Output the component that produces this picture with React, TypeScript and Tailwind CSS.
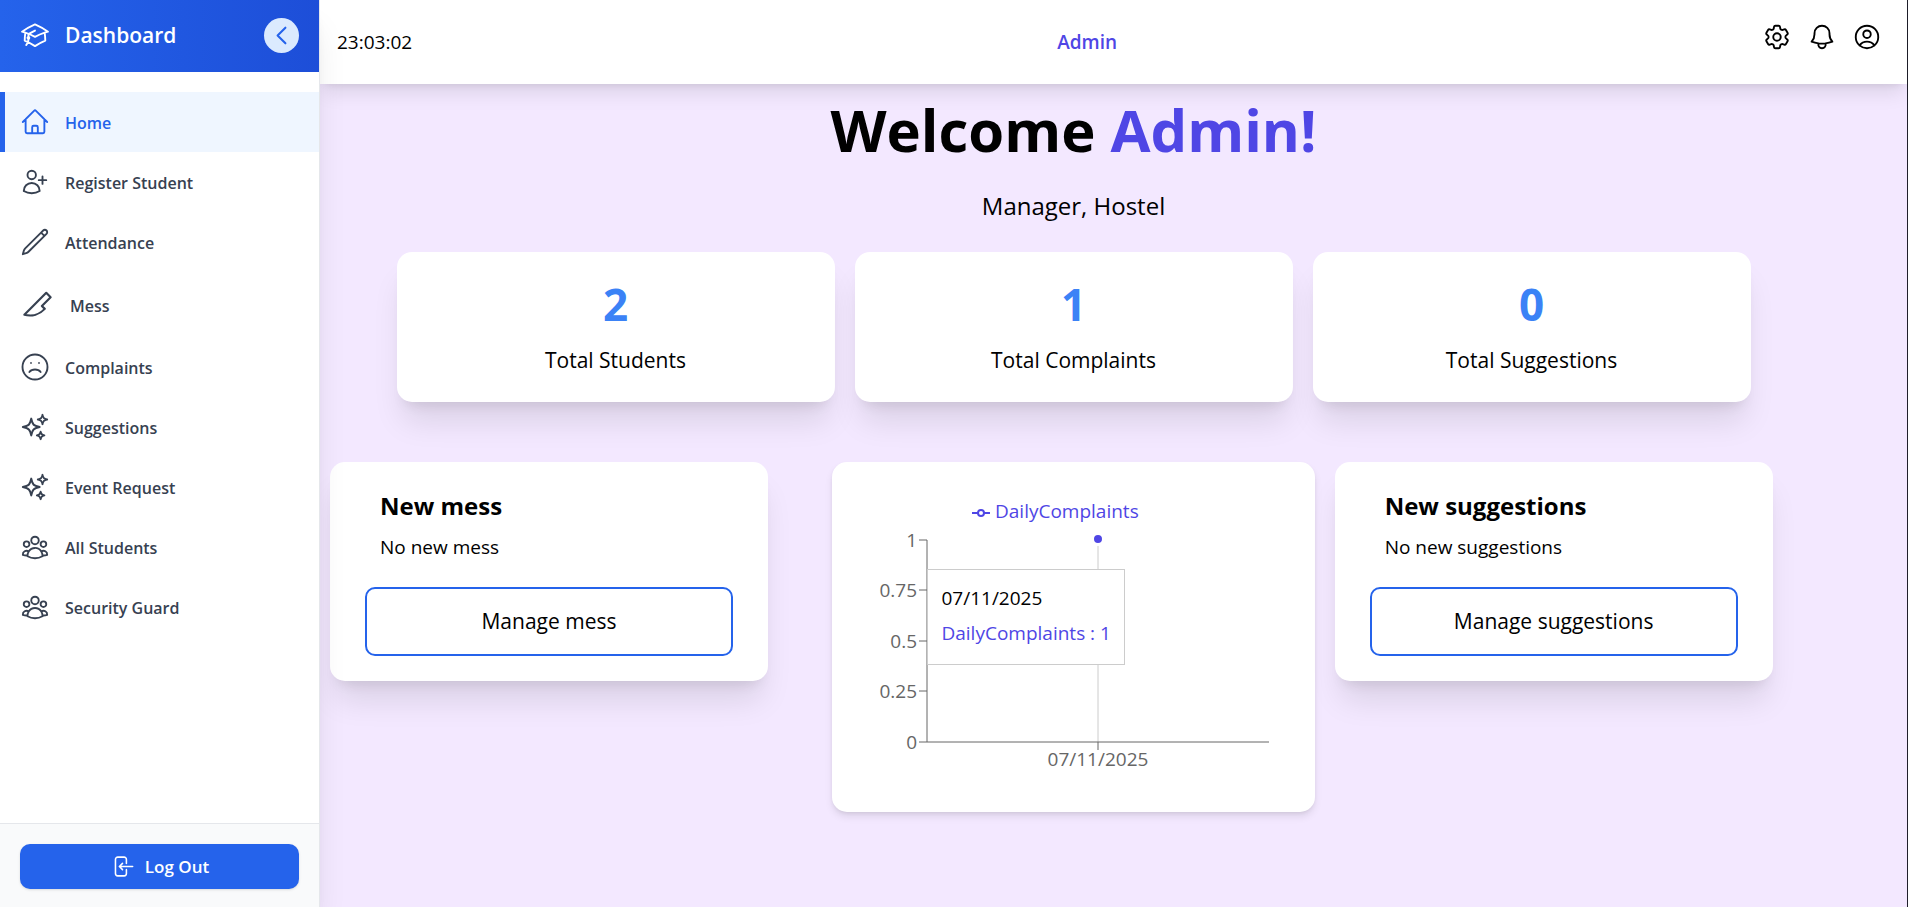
import { useState } from "react";
import type { ReactNode } from "react";
import { HiOutlineAcademicCap } from "react-icons/hi2";

type IconProps = { className?: string; strokeWidth?: number; children?: ReactNode };

function Icon({ className = "size-[30px]", strokeWidth = 1.5, children }: IconProps) {
  return (
    <svg
      className={`shrink-0 ${className}`}
      viewBox="0 0 24 24"
      fill="none"
      stroke="currentColor"
      strokeWidth={strokeWidth}
      strokeLinecap="round"
      strokeLinejoin="round"
      aria-hidden="true"
    >
      {children}
    </svg>
  );
}

const homeIcon = (
  <Icon>
    <path d="m2.25 12 8.954-8.955c.44-.439 1.152-.439 1.591 0L21.75 12M4.5 9.75v10.125c0 .621.504 1.125 1.125 1.125H9.75v-4.875c0-.621.504-1.125 1.125-1.125h2.25c.621 0 1.125.504 1.125 1.125V21h4.125c.621 0 1.125-.504 1.125-1.125V9.75M8.25 21h8.25" />
  </Icon>
);

const userPlusIcon = (
  <Icon>
    <path d="M18 7.5v3m0 0v3m0-3h3m-3 0h-3m-2.25-4.125a3.375 3.375 0 1 1-6.75 0 3.375 3.375 0 0 1 6.75 0ZM3 19.235v-.11a6.375 6.375 0 0 1 12.75 0v.109A12.318 12.318 0 0 1 9.374 21c-2.331 0-4.512-.645-6.374-1.766Z" />
  </Icon>
);

const pencilIcon = (
  <Icon>
    <path d="m16.862 4.487 1.687-1.688a1.875 1.875 0 1 1 2.652 2.652L6.832 19.82a4.5 4.5 0 0 1-1.897 1.13l-2.685.8.8-2.685a4.5 4.5 0 0 1 1.13-1.897L16.863 4.487Zm0 0L19.5 7.125" />
  </Icon>
);

const sliceIcon = (
  <Icon className="size-[35px]">
    <path d="M3 19l15 -15l3 3l-6 6l2 2a14 14 0 0 1 -14 4" />
  </Icon>
);

const frownIcon = (
  <Icon>
    <circle cx="12" cy="12" r="10" />
    <path d="M16.5 16S15 14 12 14s-4.5 2-4.5 2" />
    <circle cx="8.8" cy="8.8" r=".25" strokeWidth="1" />
    <circle cx="15.2" cy="8.8" r=".25" strokeWidth="1" />
  </Icon>
);

const sparklesIcon = (
  <Icon>
    <path d="M9.813 15.904 9 18.75l-.813-2.846a4.5 4.5 0 0 0-3.09-3.09L2.25 12l2.846-.813a4.5 4.5 0 0 0 3.09-3.09L9 5.25l.813 2.846a4.5 4.5 0 0 0 3.09 3.09L15.75 12l-2.846.813a4.5 4.5 0 0 0-3.09 3.09ZM18.259 8.715 18 9.75l-.259-1.035a3.375 3.375 0 0 0-2.455-2.456L14.25 6l1.036-.259a3.375 3.375 0 0 0 2.455-2.456L18 2.25l.259 1.035a3.375 3.375 0 0 0 2.456 2.456L21.75 6l-1.035.259a3.375 3.375 0 0 0-2.456 2.456ZM16.894 20.567 16.5 21.75l-.394-1.183a2.25 2.25 0 0 0-1.423-1.423L13.5 18.75l1.183-.394a2.25 2.25 0 0 0 1.423-1.423l.394-1.183.394 1.183a2.25 2.25 0 0 0 1.423 1.423l1.183.394-1.183.394a2.25 2.25 0 0 0-1.423 1.423Z" />
  </Icon>
);

const groupIcon = (
  <Icon>
    <path d="M18 18.72a9.094 9.094 0 0 0 3.741-.479 3 3 0 0 0-4.682-2.72m.94 3.198.001.031c0 .225-.012.447-.037.666A11.944 11.944 0 0 1 12 21c-2.17 0-4.207-.576-5.963-1.584A6.062 6.062 0 0 1 6 18.719m12 0a5.971 5.971 0 0 0-.941-3.197m0 0A5.995 5.995 0 0 0 12 12.75a5.995 5.995 0 0 0-5.058 2.772m0 0a3 3 0 0 0-4.681 2.72 8.986 8.986 0 0 0 3.74.477m.94-3.197a5.971 5.971 0 0 0-.94 3.197M15 6.75a3 3 0 1 1-6 0 3 3 0 0 1 6 0Zm6 3a2.25 2.25 0 1 1-4.5 0 2.25 2.25 0 0 1 4.5 0Zm-13.5 0a2.25 2.25 0 1 1-4.5 0 2.25 2.25 0 0 1 4.5 0Z" />
  </Icon>
);

const navItems: { label: string; icon: ReactNode }[] = [
  { label: "Home", icon: homeIcon },
  { label: "Register Student", icon: userPlusIcon },
  { label: "Attendance", icon: pencilIcon },
  { label: "Mess", icon: sliceIcon },
  { label: "Complaints", icon: frownIcon },
  { label: "Suggestions", icon: sparklesIcon },
  { label: "Event Request", icon: sparklesIcon },
  { label: "All Students", icon: groupIcon },
  { label: "Security Guard", icon: groupIcon },
];

function Sidebar({ active, onSelect }: { active: string; onSelect: (label: string) => void }) {
  return (
    <aside className="relative z-20 flex w-80 shrink-0 flex-col border-r border-[#e5e7eb] bg-white shadow-[0_25px_31px_-6px_rgba(0,0,0,0.1),0_10px_13px_-8px_rgba(0,0,0,0.1)]">
      <div className="flex h-[72px] items-center justify-between bg-linear-to-r from-[#2563eb] to-[#1d4ed8] px-5 pb-[2px] text-white">
        <div className="flex items-center gap-[15px]">
          <HiOutlineAcademicCap className="size-[30px]" />
          <span className="text-[21px] leading-[30px] font-semibold">Dashboard</span>
        </div>
        <button
          type="button"
          aria-label="Collapse sidebar"
          className="flex size-[35px] items-center justify-center rounded-full bg-[#dbeafe] text-[#2563eb]"
        >
          <Icon className="size-[25px]" strokeWidth={2}>
            <path d="M15.75 19.5 8.25 12l7.5-7.5" />
          </Icon>
        </button>
      </div>
      <nav className="flex flex-1 flex-col pt-5">
        {navItems.map(({ label, icon }) => (
          <a
            key={label}
            href="#"
            onClick={() => onSelect(label)}
            className={
              label === active
                ? "flex items-center gap-[15px] border-l-[5px] border-[#2563eb] bg-[#eff6ff] px-[15px] py-[15px] text-base font-semibold text-[#2563eb]"
                : "flex items-center gap-[15px] px-5 py-[15px] text-base font-semibold text-[#374151]"
            }
          >
            {icon}
            <span className="pt-[2px] leading-6">{label}</span>
          </a>
        ))}
      </nav>
      <div className="border-t border-[#e5e7eb] bg-[#f9fafb] px-5 pt-5 pb-[18px]">
        <button
          type="button"
          className="flex h-[45px] w-full items-center justify-center gap-[10px] rounded-[10px] bg-[#2563eb] text-[17px] font-semibold text-white shadow-sm"
        >
          <Icon className="size-[25px]">
            <path d="M15.75 9V5.25A2.25 2.25 0 0 0 13.5 3h-6a2.25 2.25 0 0 0-2.25 2.25v13.5A2.25 2.25 0 0 0 7.5 21h6a2.25 2.25 0 0 0 2.25-2.25V15M12 9l-3 3m0 0 3 3m-3-3h12.75" />
          </Icon>
          Log Out
        </button>
      </div>
    </aside>
  );
}

function Header() {
  return (
    <header className="relative z-10 flex h-[84px] items-center justify-between bg-white pr-[25px] pl-[17px] text-[19px] shadow-[0_12px_19px_-4px_rgba(0,0,0,0.1),0_5px_8px_-5px_rgba(0,0,0,0.1)]">
      <time>23:03:02</time>
      <span className="font-semibold text-[#4f46e5]">Admin</span>
      <div className="mb-[10px] flex gap-[15px]">
        <button type="button" aria-label="Settings">
          <Icon>
            <path d="M9.594 3.94c.09-.542.56-.94 1.11-.94h2.593c.55 0 1.02.398 1.11.94l.213 1.281c.063.374.313.686.645.87.074.04.147.083.22.127.325.196.72.257 1.075.124l1.217-.456a1.125 1.125 0 0 1 1.37.49l1.296 2.247a1.125 1.125 0 0 1-.26 1.431l-1.003.827c-.293.241-.438.613-.43.992a7.723 7.723 0 0 1 0 .255c-.008.378.137.75.43.991l1.004.827c.424.35.534.955.26 1.43l-1.298 2.247a1.125 1.125 0 0 1-1.369.491l-1.217-.456c-.355-.133-.75-.072-1.076.124a6.47 6.47 0 0 1-.22.128c-.331.183-.581.495-.644.869l-.213 1.281c-.09.543-.56.94-1.11.94h-2.594c-.55 0-1.019-.398-1.11-.94l-.213-1.281c-.062-.374-.312-.686-.644-.87a6.52 6.52 0 0 1-.22-.127c-.325-.196-.72-.257-1.076-.124l-1.217.456a1.125 1.125 0 0 1-1.369-.49l-1.297-2.247a1.125 1.125 0 0 1 .26-1.431l1.004-.827c.292-.24.437-.613.43-.991a6.932 6.932 0 0 1 0-.255c.007-.38-.138-.751-.43-.992l-1.004-.827a1.125 1.125 0 0 1-.26-1.43l1.297-2.247a1.125 1.125 0 0 1 1.37-.491l1.216.456c.356.133.751.072 1.076-.124.072-.044.146-.086.22-.128.332-.183.582-.495.644-.869l.214-1.28Z" />
            <path d="M15 12a3 3 0 1 1-6 0 3 3 0 0 1 6 0Z" />
          </Icon>
        </button>
        <button type="button" aria-label="Notifications">
          <Icon>
            <path d="M14.857 17.082a23.848 23.848 0 0 0 5.454-1.31A8.967 8.967 0 0 1 18 9.75V9A6 6 0 0 0 6 9v.75a8.967 8.967 0 0 1-2.312 6.022c1.733.64 3.56 1.085 5.455 1.31m5.714 0a24.255 24.255 0 0 1-5.714 0m5.714 0a3 3 0 1 1-5.714 0" />
          </Icon>
        </button>
        <button type="button" aria-label="Account">
          <Icon>
            <path d="M17.982 18.725A7.488 7.488 0 0 0 12 15.75a7.488 7.488 0 0 0-5.982 2.975m11.963 0a9 9 0 1 0-11.963 0m11.963 0A8.966 8.966 0 0 1 12 21a8.966 8.966 0 0 1-5.982-2.275M15 9.75a3 3 0 1 1-6 0 3 3 0 0 1 6 0Z" />
          </Icon>
        </button>
      </div>
    </header>
  );
}

function StatCard({ value, label }: { value: number; label: string }) {
  return (
    <div className="flex h-[150px] w-full max-w-[438px] flex-col items-center justify-center rounded-[15px] bg-white pt-[2px] shadow-[0_25px_31px_-6px_rgba(0,0,0,0.1),0_10px_13px_-8px_rgba(0,0,0,0.1)]">
      <span className="text-[44px] leading-[50px] font-bold text-[#3b82f6]">{value}</span>
      <span className="mt-[14px] text-[21px] leading-[35px]">{label}</span>
    </div>
  );
}

function NoticeCard({ topic }: { topic: string }) {
  return (
    <section className="w-full max-w-[438px] rounded-[15px] bg-white px-[35px] py-[25px] shadow-[0_25px_31px_-6px_rgba(0,0,0,0.1),0_10px_13px_-8px_rgba(0,0,0,0.1)]">
      <div className="px-[15px]">
        <h2 className="text-2xl leading-[38px] font-bold">New {topic}</h2>
        <p className="mt-[7px] text-[19px] leading-[30px]">No new {topic}</p>
      </div>
      <button
        type="button"
        className="mt-[25px] h-[69px] w-full rounded-[10px] border-2 border-[#2563eb] text-[21px]"
      >
        Manage {topic}
      </button>
    </section>
  );
}

const yTicks = [
  { label: "1", y: 78 },
  { label: "0.75", y: 128 },
  { label: "0.5", y: 179 },
  { label: "0.25", y: 229 },
  { label: "0", y: 280 },
];

function ComplaintsChart() {
  return (
    <section className="flex h-[350px] justify-center rounded-[15px] bg-white shadow-[0_5px_8px_-1px_rgba(0,0,0,0.1),0_2px_5px_-2px_rgba(0,0,0,0.1)]">
      <div className="relative h-[350px] w-[482px]">
        <svg viewBox="0 0 482 350" className="size-full text-[19px]" role="img" aria-label="Daily complaints">
          <g stroke="#4f46e5" strokeWidth="2" fill="none">
            <path d="M140 51h6M152 51h6" />
            <circle cx="149" cy="51" r="3" />
          </g>
          <text x="163" y="56" fill="#4f46e5">DailyComplaints</text>
          <path d="M266 84V280" stroke="#ccc" />
          <g stroke="#666" fill="none">
            <path d="M95 78V280M95 280H437M266 280v8" />
            {yTicks.map(({ label, y }) => (
              <path key={label} d={`M87 ${y}h8`} />
            ))}
          </g>
          <g fill="#666">
            {yTicks.map(({ label, y }) => (
              <text key={label} x="85" y={y + 7} textAnchor="end">
                {label}
              </text>
            ))}
            <text x="266" y="304" textAnchor="middle">07/11/2025</text>
          </g>
          <circle cx="266" cy="77" r="5" fill="#4f46e5" stroke="#fff" strokeWidth="2" />
        </svg>
        <div className="absolute top-[107px] left-[95px] border border-[#ccc] bg-white px-[13px] pt-[13px] pb-4 text-[19px] leading-[30px] whitespace-nowrap">
          <p>07/11/2025</p>
          <p className="mt-[5px] text-[#4f46e5]">DailyComplaints : 1</p>
        </div>
      </div>
    </section>
  );
}

export default function App() {
  const [active, setActive] = useState("Home");

  return (
    <div className="flex min-h-screen border-r border-[#1f1f2b] bg-[#f3e8ff] font-['Open_Sans','Noto_Sans',sans-serif] text-black">
      <Sidebar active={active} onSelect={setActive} />
      <div className="flex min-w-0 flex-1 flex-col">
        <Header />
        <main className="pr-20">
          <div className="pt-2 text-center">
            <h1 className="text-[58px] leading-[75px] font-bold">
              Welcome <span className="text-[#4f46e5]">Admin!</span>
            </h1>
            <p className="mt-5 text-2xl leading-[38px]">Manager, Hostel</p>
          </div>
          <div className="mt-[27px] flex justify-center gap-5">
            <StatCard value={2} label="Total Students" />
            <StatCard value={1} label="Total Complaints" />
            <StatCard value={0} label="Total Suggestions" />
          </div>
          <div className="mt-[60px] grid grid-cols-3 items-start gap-5 px-[10px]">
            <NoticeCard topic="mess" />
            <ComplaintsChart />
            <NoticeCard topic="suggestions" />
          </div>
        </main>
      </div>
    </div>
  );
}
